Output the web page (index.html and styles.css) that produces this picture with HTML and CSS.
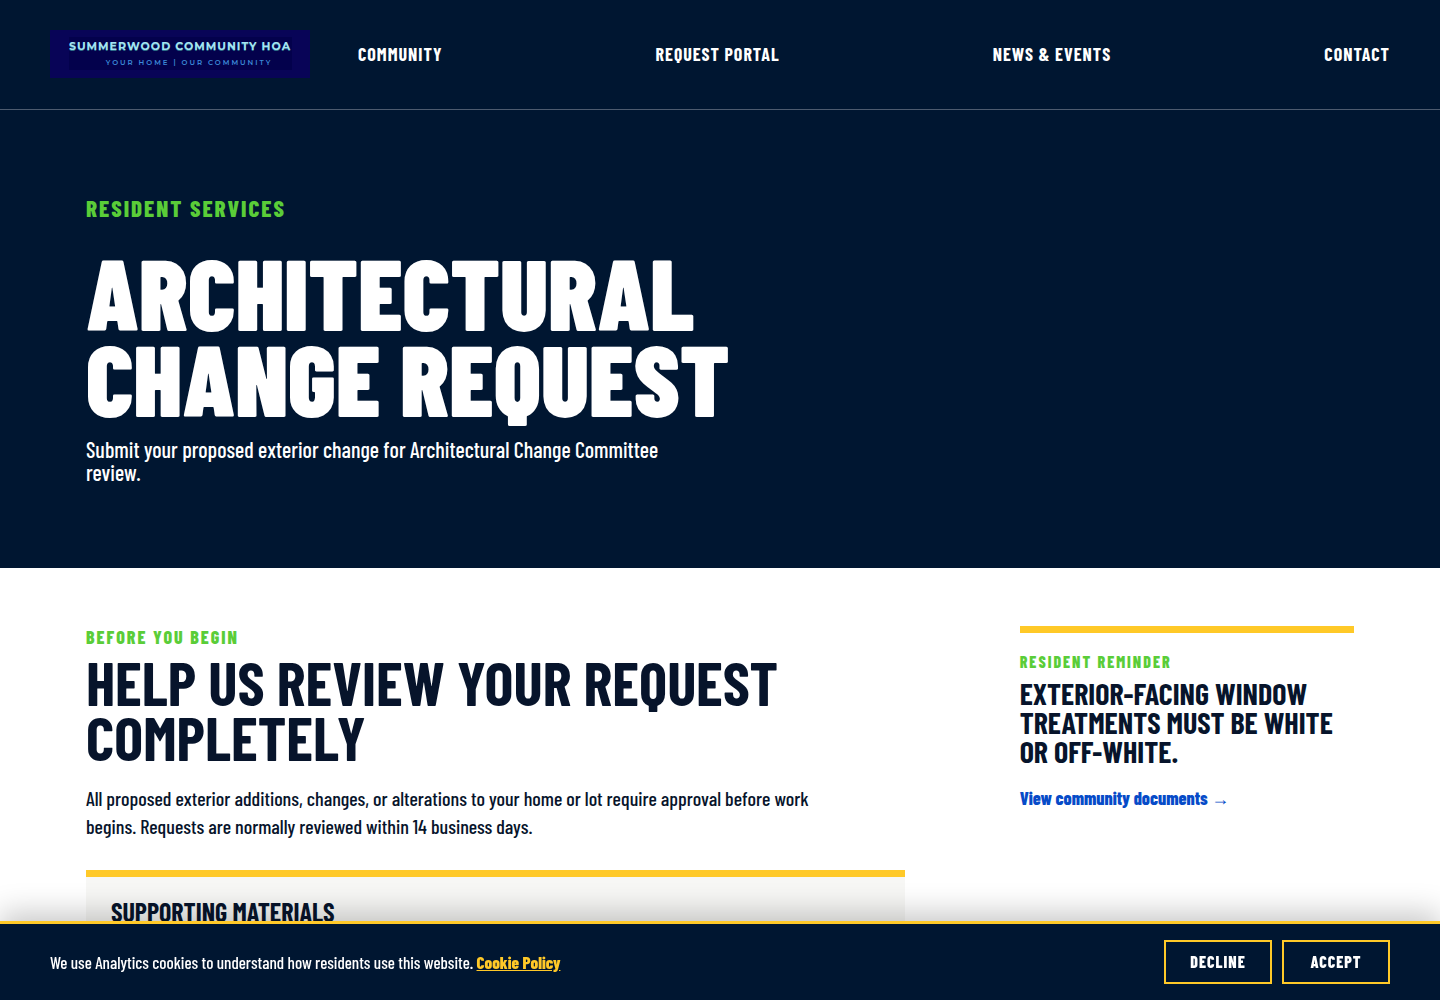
FILE: index.html
```html
<!DOCTYPE html>
<html lang="en">
<head>
  <meta charset="UTF-8">
  <meta name="viewport" content="width=device-width, initial-scale=1.0">
  <title>Architectural Change Request | Summerwood Community HOA</title>
  <link rel="stylesheet" href="styles.css">
</head>
<body>
  <header class="site-header">
    <a class="logo" href="#" aria-label="Summerwood Community HOA home">
      <svg width="260" height="48" viewBox="0 0 260 48" aria-hidden="true">
        <rect width="260" height="48" fill="#080457"/>
        <rect x="19" y="7" width="223" height="33" fill="#03014c"/>
        <text class="logo-shadow" x="130" y="21">SUMMERWOOD COMMUNITY HOA</text>
        <text class="logo-name" x="130" y="20">SUMMERWOOD COMMUNITY HOA</text>
        <text class="logo-tag" x="139" y="35">YOUR HOME | OUR COMMUNITY</text>
      </svg>
    </a>
    <nav class="site-nav">
      <a href="#">Community</a>
      <a href="#">Request Portal</a>
      <a href="#">News &amp; Events</a>
      <a href="#">Contact</a>
    </nav>
  </header>

  <main>
    <section class="hero">
      <p class="eyebrow eyebrow-large">Resident Services</p>
      <h1>Architectural<br>Change Request</h1>
      <p class="hero-text">Submit your proposed exterior change for Architectural Change Committee review.</p>
    </section>

    <div class="content">
      <section class="intro">
        <p class="eyebrow">Before You Begin</p>
        <h2>Help us review your request completely</h2>
        <p class="intro-text">All proposed exterior additions, changes, or alterations to your home or lot require approval before work begins. Requests are normally reviewed within 14 business days.</p>
        <div class="materials">
          <h3>Supporting Materials</h3>
        </div>
      </section>

      <aside class="reminder">
        <p class="eyebrow eyebrow-small">Resident Reminder</p>
        <h3>Exterior-facing window treatments must be white or off-white.</h3>
        <a href="#">View community documents →</a>
      </aside>
    </div>
  </main>

  <div class="cookie-banner" role="region" aria-label="Cookie notice">
    <p>We use Analytics cookies to understand how residents use this website. <a href="#">Cookie Policy</a></p>
    <div class="cookie-actions">
      <button type="button">Decline</button>
      <button type="button">Accept</button>
    </div>
  </div>
</body>
</html>
```
FILE: styles.css
```css
* {
  box-sizing: border-box;
}

body {
  margin: 0;
  background: #fff;
  color: #07142b;
  font-family: "Barlow Condensed", "Roboto Condensed", "Liberation Sans Narrow", "Liberation Sans", sans-serif;
  font-size: 18px;
  font-weight: 500;
}

h1, h2, h3, p {
  margin: 0;
}

h1, h2, h3 {
  text-transform: uppercase;
}

/* header */
.site-header {
  display: flex;
  align-items: center;
  gap: 48px;
  padding: 30px 50px 31px;
  background: #001631;
  border-bottom: 1px solid #4d5b6f;
}

.logo svg {
  display: block;
}

.logo text {
  font-family: Montserrat, Lato, sans-serif;
  text-anchor: middle;
}

.logo .logo-name,
.logo .logo-shadow {
  font-size: 11px;
  font-weight: 700;
  letter-spacing: 1px;
  fill: #a4e3f2;
}

.logo .logo-shadow {
  fill: #2d6c88;
}

.logo .logo-tag {
  font-size: 7px;
  font-weight: 600;
  letter-spacing: 2px;
  fill: #3c8ad8;
}

.site-nav {
  display: flex;
  flex: 1;
  justify-content: space-between;
}

.site-nav a {
  color: #fff;
  font-size: 18px;
  line-height: 24px;
  font-weight: 700;
  letter-spacing: 1px;
  text-decoration: none;
  text-transform: uppercase;
}

/* hero */
.hero {
  padding: 84px 86px;
  background: #001631;
  color: #fff;
}

.eyebrow {
  color: #5acd38;
  font-size: 18px;
  line-height: 22px;
  font-weight: 800;
  letter-spacing: 2px;
  text-transform: uppercase;
}

.eyebrow-large {
  font-size: 23px;
  line-height: 28px;
}

.eyebrow-small {
  font-size: 16px;
}

h1 {
  margin-top: 26px;
  font-size: 100px;
  line-height: 86px;
  font-weight: 900;
}

.hero-text {
  max-width: 620px;
  margin-top: 18px;
  font-size: 22px;
  line-height: 23px;
}

/* content */
.content {
  display: grid;
  grid-template-columns: 71fr 29fr;
  gap: 115px;
  align-items: start;
  padding: 58px 86px 120px;
}

h2 {
  margin-top: 6px;
  font-size: 61px;
  line-height: 55px;
  font-weight: 700;
}

.intro-text {
  max-width: 740px;
  margin-top: 20px;
  font-size: 20px;
  line-height: 28px;
}

.materials {
  margin-top: 30px;
  padding: 21px 25px;
  min-height: 180px;
  background: #f7f7f5;
  border-top: 7px solid #ffc928;
}

.materials h3 {
  font-size: 26px;
  line-height: 28px;
}

.reminder {
  padding-top: 18px;
  border-top: 7px solid #ffc928;
}

.reminder h3 {
  margin-top: 6px;
  font-size: 30px;
  line-height: 29px;
}

.reminder a {
  display: inline-block;
  margin-top: 21px;
  color: #064bc8;
  font-weight: 800;
  text-decoration: none;
}

/* cookie banner */
.cookie-banner {
  position: fixed;
  right: 0;
  bottom: 0;
  left: 0;
  display: flex;
  align-items: center;
  justify-content: space-between;
  gap: 24px;
  padding: 16px 50px;
  background: #001631;
  border-top: 3px solid #ffc928;
  box-shadow: 0 -8px 30px rgba(0, 0, 0, 0.22);
  color: #fff;
  font-size: 17px;
  line-height: 20px;
}

.cookie-banner a {
  color: #ffc928;
  font-weight: 800;
}

.cookie-actions {
  display: flex;
  gap: 10px;
}

.cookie-actions button {
  width: 108px;
  height: 44px;
  padding: 0 0 2px;
  background: transparent;
  border: 2px solid #ffc928;
  color: #fff;
  font-family: inherit;
  font-size: 16px;
  font-weight: 800;
  letter-spacing: 1px;
  text-transform: uppercase;
  cursor: pointer;
}
```
